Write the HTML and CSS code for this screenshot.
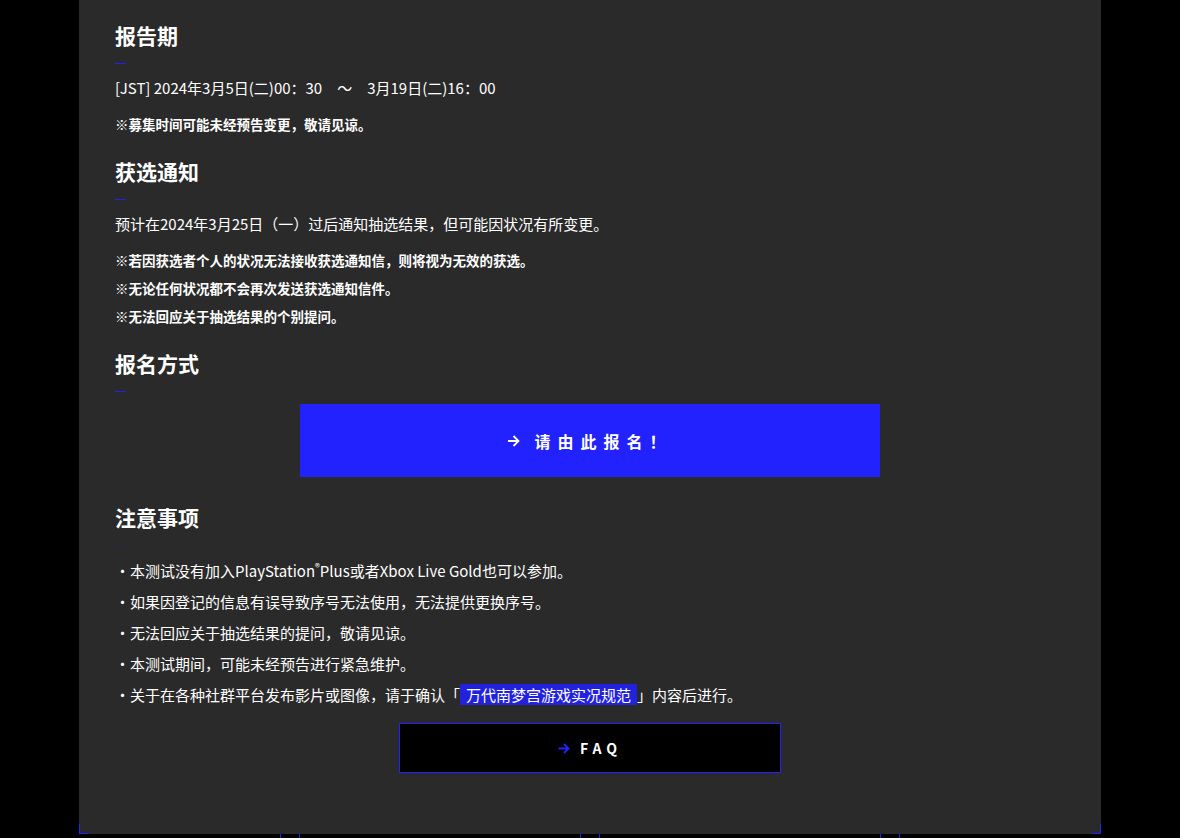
FILE: index.html
```html
<!DOCTYPE html>
<html lang="zh-CN">
<head>
    <meta charset="UTF-8">
    <meta name="viewport" content="width=device-width, initial-scale=1.0">
    <title>测试报名</title>
    <link rel="stylesheet" href="styles.css">
</head>
<body>
    <div class="panel">
        <div class="section">
            <h2>报告期</h2>
            <p class="text">[JST] 2024年3月5日(二)00：30　～　3月19日(二)16：00</p>
            <p class="note">※募集时间可能未经预告变更，敬请见谅。</p>
        </div>

        <div class="section">
            <h2>获选通知</h2>
            <p class="text">预计在2024年3月25日（一）过后通知抽选结果，但可能因状况有所变更。</p>
            <p class="note">※若因获选者个人的状况无法接收获选通知信，则将视为无效的获选。</p>
            <p class="note">※无论任何状况都不会再次发送获选通知信件。</p>
            <p class="note">※无法回应关于抽选结果的个别提问。</p>
        </div>

        <div class="section">
            <h2>报名方式</h2>
            <a class="entry-btn" href="#">
                <svg class="arrow" width="13" height="12" viewBox="0 0 13 12"><path d="M1 6h10.5M6.5 1l5 5-5 5" fill="none" stroke="currentColor" stroke-width="1.8"/></svg>
                请由此报名！
            </a>
        </div>

        <div class="section section-notice">
            <h2 class="dim">注意事项</h2>
            <ul class="notice">
                <li>本测试没有加入PlayStation<sup>®</sup>Plus或者Xbox Live Gold也可以参加。</li>
                <li>如果因登记的信息有误导致序号无法使用，无法提供更换序号。</li>
                <li>无法回应关于抽选结果的提问，敬请见谅。</li>
                <li>本测试期间，可能未经预告进行紧急维护。</li>
                <li>关于在各种社群平台发布影片或图像，请于确认「<a class="hl" href="#">万代南梦宫游戏实况规范</a>」内容后进行。</li>
            </ul>
            <a class="faq-btn" href="#">
                <svg class="arrow" width="12" height="11" viewBox="0 0 12 11"><path d="M0.5 5.5h10M6 1l4.5 4.5L6 10" fill="none" stroke="currentColor" stroke-width="1.8"/></svg>
                FAQ
            </a>
        </div>
    </div>

    <div class="below">
        <div class="cell"></div>
        <div class="cell"></div>
        <div class="cell"></div>
        <div class="cell"></div>
    </div>
</body>
</html>
```

FILE: styles.css
```css
body {
    margin: 0;
    background-color: #000;
    color: #fff;
    font-family: "Noto Sans CJK SC", "Noto Sans", sans-serif;
}
.panel {
    position: relative;
    width: 1022px;
    margin: 0 auto;
    background-color: #2a2a2a;
    padding: 22px 36px 61px;
    box-sizing: border-box;
}
.panel::before,
.panel::after {
    content: "";
    position: absolute;
    bottom: 0;
    width: 8px;
    height: 9px;
    border-bottom: 1px solid #2222ff;
}
.panel::before {
    left: 0;
    border-left: 1px solid #2222ff;
}
.panel::after {
    right: 0;
    border-right: 1px solid #2222ff;
}
.section + .section {
    margin-top: 24px;
}
.section-notice {
    margin-top: 27px !important;
}
h2 {
    margin: 0;
    font-size: 21px;
    line-height: 26px;
    font-weight: 700;
}
h2::after {
    content: "";
    display: block;
    width: 11px;
    height: 1px;
    margin-top: 15px;
    background-color: #2020ff;
}
h2.dim::after {
    background-color: #262650;
}
.text {
    margin: 12px 0 0;
    font-size: 15px;
    line-height: 24px;
}
.note {
    margin: 8px 0 0;
    font-size: 13.5px;
    line-height: 20px;
    font-weight: 700;
}
.text + .note {
    margin-top: 14px;
}
.entry-btn {
    display: flex;
    align-items: center;
    justify-content: center;
    width: 580px;
    height: 73px;
    margin: 12px auto 0;
    background-color: #2222ff;
    color: #fff;
    text-decoration: none;
    font-size: 16px;
    font-weight: 700;
    letter-spacing: 7px;
}
.entry-btn .arrow {
    margin-right: 14px;
}
.notice {
    list-style: none;
    margin: 13px 0 0;
    padding: 0;
}
.notice li {
    font-size: 15px;
    line-height: 24px;
}
.notice li + li {
    margin-top: 7px;
}
.notice li::before {
    content: "・";
}
.notice sup {
    font-size: 10px;
    line-height: 0;
}
.hl {
    background-color: #2222dd;
    color: #fff;
    text-decoration: none;
    padding: 0 6px;
}
.faq-btn {
    display: flex;
    align-items: center;
    justify-content: center;
    width: 382px;
    height: 50px;
    box-sizing: border-box;
    margin: 16px auto 0;
    background-color: #000;
    border: 1px solid #2222ff;
    color: #fff;
    text-decoration: none;
    font-size: 14px;
    font-weight: 700;
    letter-spacing: 5px;
}
.faq-btn .arrow {
    color: #2222ff;
    margin-right: 10px;
}
.below {
    display: flex;
    gap: 18px;
    margin-left: -1px;
    height: 20px;
}
.cell {
    flex: 0 0 282px;
    box-sizing: border-box;
    border-left: 1px solid #2222ff;
    border-right: 1px solid #2222ff;
}
```
